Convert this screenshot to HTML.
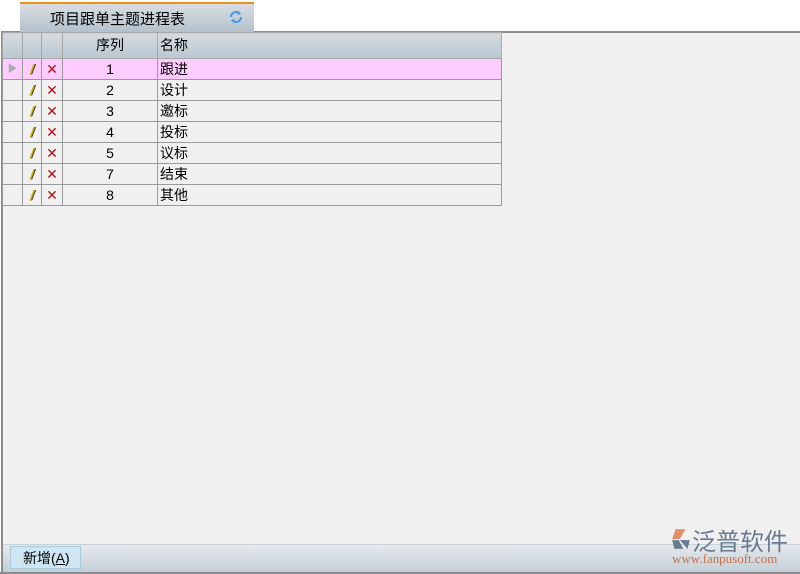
<!DOCTYPE html>
<html><head><meta charset="utf-8"><style>
*{margin:0;padding:0;box-sizing:border-box}
body{width:800px;height:574px;overflow:hidden;background:#fff;position:relative;font-family:"Liberation Sans","Noto Sans CJK SC",sans-serif;font-size:14px;color:#000}
.tab{position:absolute;left:20px;top:2px;width:234px;height:30px;border-top:2px solid #f0901c;background:linear-gradient(#d8dde2,#b4c2cc);}
.tab span{position:absolute;left:30px;top:4px;font-size:15px}
.panel{position:absolute;left:1px;top:31px;width:799px;height:543px;background:#f0f0f0;border:2px solid #8c8c8c;border-right:none}
.grid{position:absolute;left:2px;top:32px;border-collapse:collapse}
.grid td{border:1px solid #9a9a9a;height:21px;padding:0;font-size:14px;line-height:19px}
.grid tr.h td{height:26px;background:linear-gradient(#d6dadd,#b9c8d2);border-color:#a8a8a8}
.grid tr.sel td{background:#ffccff}
.grid tr td{background:#f0f0f0}
.c{text-align:center}
.pen{color:#c8b000;font-style:italic;font-weight:bold;font-size:14px;text-shadow:1px 0 0 #333}
.x{color:#b01010;font-size:13px}
.bar{position:absolute;left:3px;top:544px;width:797px;height:28px;background:linear-gradient(#e6e9ec,#c2cfd8);border-top:1px solid #c9d0d6}
.btn{position:absolute;left:10px;top:546px;width:71px;height:23px;background:#cfe6f2;border:1px solid #a9cbe0;font-size:14px;padding:1px 0 0 12px}
.bot{position:absolute;left:0;top:572px;width:800px;height:2px;background:#8c8c8c}
</style></head><body>
<div class="panel"></div>
<div class="tab"><span>项目跟单主题进程表</span>
<svg style="position:absolute;left:209px;top:6px" width="14" height="14" viewBox="0 0 14 14"><path d="M2 7a5 5 0 0 1 9-3M12 7a5 5 0 0 1-9 3" stroke="#4a9ae8" stroke-width="2.2" fill="none"/><path d="M9 1l3 3-4 1z M5 13l-3-3 4-1z" fill="#4a9ae8"/></svg></div>
<table class="grid">
<tr class="h"><td style="width:20px"></td><td style="width:19px"></td><td style="width:21px"></td><td class="c" style="width:95px">序列</td><td style="width:344px;padding-left:2px">名称</td></tr>
<tr class="sel"><td class="c" style="color:#aaa;font-size:10px">▶</td><td class="c pen">/</td><td class="c x">✕</td><td class="c">1</td><td style="padding-left:2px">跟进</td></tr>
<tr><td></td><td class="c pen">/</td><td class="c x">✕</td><td class="c">2</td><td style="padding-left:2px">设计</td></tr>
<tr><td></td><td class="c pen">/</td><td class="c x">✕</td><td class="c">3</td><td style="padding-left:2px">邀标</td></tr>
<tr><td></td><td class="c pen">/</td><td class="c x">✕</td><td class="c">4</td><td style="padding-left:2px">投标</td></tr>
<tr><td></td><td class="c pen">/</td><td class="c x">✕</td><td class="c">5</td><td style="padding-left:2px">议标</td></tr>
<tr><td></td><td class="c pen">/</td><td class="c x">✕</td><td class="c">7</td><td style="padding-left:2px">结束</td></tr>
<tr><td></td><td class="c pen">/</td><td class="c x">✕</td><td class="c">8</td><td style="padding-left:2px">其他</td></tr>
</table>
<div class="bar"></div>
<div class="btn">新增(<u>A</u>)</div>
<div style="position:absolute;left:670px;top:528px;width:22px;height:22px">
<svg width="22" height="22" viewBox="0 0 20 20"><path d="M5 1h9l-5 9h-7z" fill="#e2906a"/><path d="M2 11h6l4 8h-8z M9 11h9l-2 8z" fill="#6a7a90"/></svg></div>
<div style="position:absolute;left:692px;top:522px;font-size:24px;color:#6a7a90;letter-spacing:0px">泛普软件</div>
<div style="position:absolute;left:672px;top:551px;font-family:'Liberation Serif',serif;font-size:13px;color:#c8704a">www.fanpusoft.com</div>
<div class="bot"></div>
</body></html>
